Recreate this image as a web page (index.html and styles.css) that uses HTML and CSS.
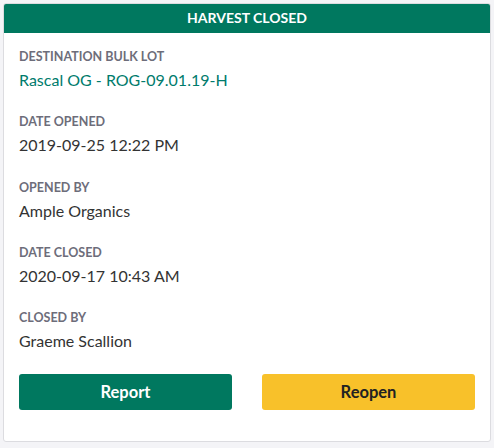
FILE: index.html
```html
<!DOCTYPE html>
<html>
<head>
<meta charset="utf-8">
<link rel="stylesheet" href="styles.css">
</head>
<body>
<div class="card">
  <div class="card-header">HARVEST CLOSED</div>
  <div class="card-body">
    <div class="field">
      <div class="label">DESTINATION BULK LOT</div>
      <div class="value link">Rascal OG - ROG-09.01.19-H</div>
    </div>
    <div class="field">
      <div class="label">DATE OPENED</div>
      <div class="value">2019-09-25 12:22 PM</div>
    </div>
    <div class="field">
      <div class="label">OPENED BY</div>
      <div class="value">Ample Organics</div>
    </div>
    <div class="field">
      <div class="label">DATE CLOSED</div>
      <div class="value">2020-09-17 10:43 AM</div>
    </div>
    <div class="field">
      <div class="label">CLOSED BY</div>
      <div class="value">Graeme Scallion</div>
    </div>
    <div class="actions">
      <button class="btn btn-green">Report</button>
      <button class="btn btn-yellow">Reopen</button>
    </div>
  </div>
</div>
</body>
</html>
```
FILE: styles.css
```css
html, body {
  margin: 0;
  padding: 0;
  background: #f4f4f7;
  font-family: Lato, "Open Sans", sans-serif;
}
body {
  padding: 3px 3px 0 3px;
}
.card {
  width: 488px;
  height: 439px;
  box-sizing: border-box;
  background: #fff;
  border: 1px solid #dcdce0;
  border-radius: 3px;
  overflow: hidden;
}
.card-header {
  background: #00785f;
  color: #fff;
  font-weight: 700;
  font-size: 14px;
  height: 30px;
  line-height: 29px;
  text-align: center;
  margin: -1px -1px 0 -1px;
}
.card-body {
  padding: 15px 15px 0 15px;
}
.field {
  margin-bottom: 21.25px;
}
.label {
  font-size: 12.5px;
  font-weight: 700;
  color: #6d6d7a;
  line-height: 18px;
}
.value {
  font-size: 16px;
  color: #333;
  line-height: 24px;
  margin-top: 2px;
}
.value.link {
  color: #007b6c;
}
.actions {
  display: grid;
  grid-template-columns: 1fr 1fr;
  column-gap: 30px;
  margin-top: 14px;
}
.btn {
  height: 36px;
  border: none;
  border-radius: 3px;
  font-family: Lato, "Open Sans", sans-serif;
  font-size: 16.5px;
  font-weight: 700;
  cursor: pointer;
}
.btn-green {
  background: #00785f;
  color: #fff;
}
.btn-yellow {
  background: #f8c12a;
  color: #222;
}
```
